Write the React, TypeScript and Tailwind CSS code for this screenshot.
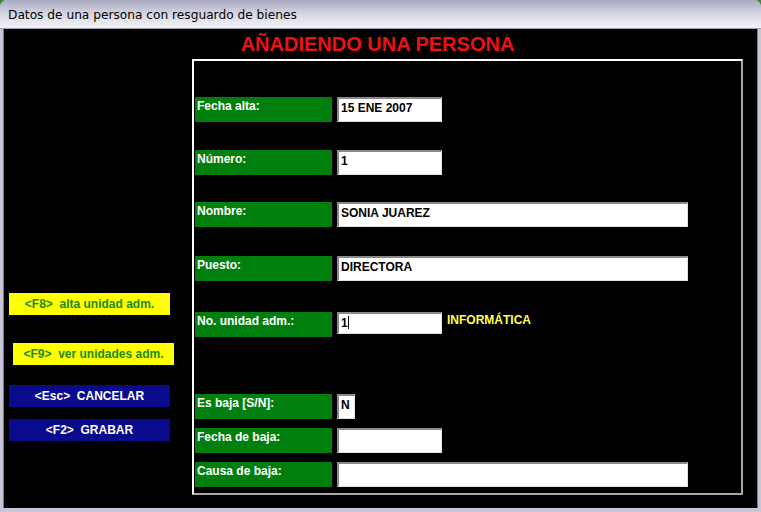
import React from 'react';

const fontUi = { fontFamily: '"Liberation Sans", Arial, sans-serif' };

interface FieldProps {
  label: string;
  value?: string;
  width: string;
  inputHeight?: string;
  className?: string;
  cursor?: boolean;
  extra?: React.ReactNode;
}

function Field({ label, value, width, inputHeight, className, cursor, extra }: FieldProps) {
  return (
    <div className={`flex items-start ${className ?? ''}`}>
      <div className="w-[137px] h-[25px] bg-[#007f0e] text-white font-bold text-[12px] leading-[14px] pl-[2px] pt-[2px]">
        {label}
      </div>
      <div
        className={`${width} ${inputHeight ?? 'h-[25px]'} ml-[5px] bg-white border-t-2 border-l-2 border-t-[#8a8a8a] border-l-[#8a8a8a] border-b border-r border-b-[#e0e0e0] border-r-[#e0e0e0] text-black font-bold text-[12px] leading-[14px] pl-[2px] pt-[2px] whitespace-nowrap`}
      >
        {value}
        {cursor && <span className="inline-block w-px h-[13px] bg-black align-[-2px]" />}
      </div>
      {extra}
    </div>
  );
}

interface KeyButtonProps {
  text: string;
  kind: 'yellow' | 'blue';
  className?: string;
}

function KeyButton({ text, kind, className }: KeyButtonProps) {
  const colors = kind === 'yellow' ? 'bg-[#ffff00] text-[#1a8a1a]' : 'bg-[#0a0a8c] text-white';
  return (
    <div
      className={`w-[161px] h-[22px] flex items-center justify-center font-bold text-[12px] whitespace-pre ${colors} ${className ?? ''}`}
    >
      {text}
    </div>
  );
}

export default function App() {
  return (
    <div className="w-[761px] h-[512px] bg-[#3c8a30] overflow-hidden" style={fontUi}>
      <div className="w-full h-full flex flex-col rounded-t-[7px] overflow-hidden bg-[#c6c6d6]">
        {/* barra de título */}
        <div className="h-[29px] shrink-0 bg-gradient-to-b from-[#a9a9c2] via-[#d6d6e2] to-[#f4f4f7] border-b border-[#9a9aae] flex items-center pl-[8px] pt-[3px]">
          <span
            className="text-black"
            style={{ fontFamily: '"DejaVu Sans", Tahoma, sans-serif', fontSize: '12.2px' }}
          >
            Datos de una persona con resguardo de bienes
          </span>
        </div>

        <div className="flex-1 flex flex-col bg-black mx-[3px] mb-[4px] border-x border-[#7a7a8e]">
          <div className="h-[30px] shrink-0 pt-[5px] text-center">
            <span className="text-[20px] leading-[20px] font-bold text-[#ee1111] pr-[6px]">
              AÑADIENDO UNA PERSONA
            </span>
          </div>

          <div className="flex flex-1">
            {/* botones de teclas */}
            <div className="w-[188px] shrink-0 flex flex-col pt-[234px]">
              <KeyButton kind="yellow" text="<F8>  alta unidad adm." className="ml-[5px]" />
              <KeyButton kind="yellow" text="<F9>  ver unidades adm." className="ml-[9px] mt-[28px]" />
              <KeyButton kind="blue" text="<Esc>  CANCELAR" className="ml-[5px] mt-[20px]" />
              <KeyButton kind="blue" text="<F2>  GRABAR" className="ml-[5px] mt-[12px]" />
            </div>

            {/* panel del formulario */}
            <div className="w-[551px] h-[436px] border-t-2 border-l-2 border-t-white border-l-white border-b-2 border-r-2 border-b-[#a8a8a8] border-r-[#a8a8a8] pl-px pt-[36px] flex flex-col">
              <Field label="Fecha alta:" value="15 ENE 2007" width="w-[105px]" />
              <Field label="Número:" value="1" width="w-[105px]" className="mt-[28px]" />
              <Field label="Nombre:" value="SONIA JUAREZ" width="w-[351px]" className="mt-[27px]" />
              <Field label="Puesto:" value="DIRECTORA" width="w-[351px]" className="mt-[29px]" />
              <Field
                label="No. unidad adm.:"
                value="1"
                cursor
                width="w-[105px]"
                inputHeight="h-[22px]"
                className="mt-[31px]"
                extra={
                  <span className="ml-[5px] mt-[1px] text-[12px] leading-[14px] font-bold text-[#ffff44]">
                    INFORMÁTICA
                  </span>
                }
              />
              <Field label="Es baja [S/N]:" value="N" width="w-[18px]" className="mt-[57px]" />
              <Field label="Fecha de baja:" width="w-[105px]" className="mt-[9px]" />
              <Field label="Causa de baja:" width="w-[351px]" className="mt-[9px]" />
            </div>
          </div>
        </div>
      </div>
    </div>
  );
}
